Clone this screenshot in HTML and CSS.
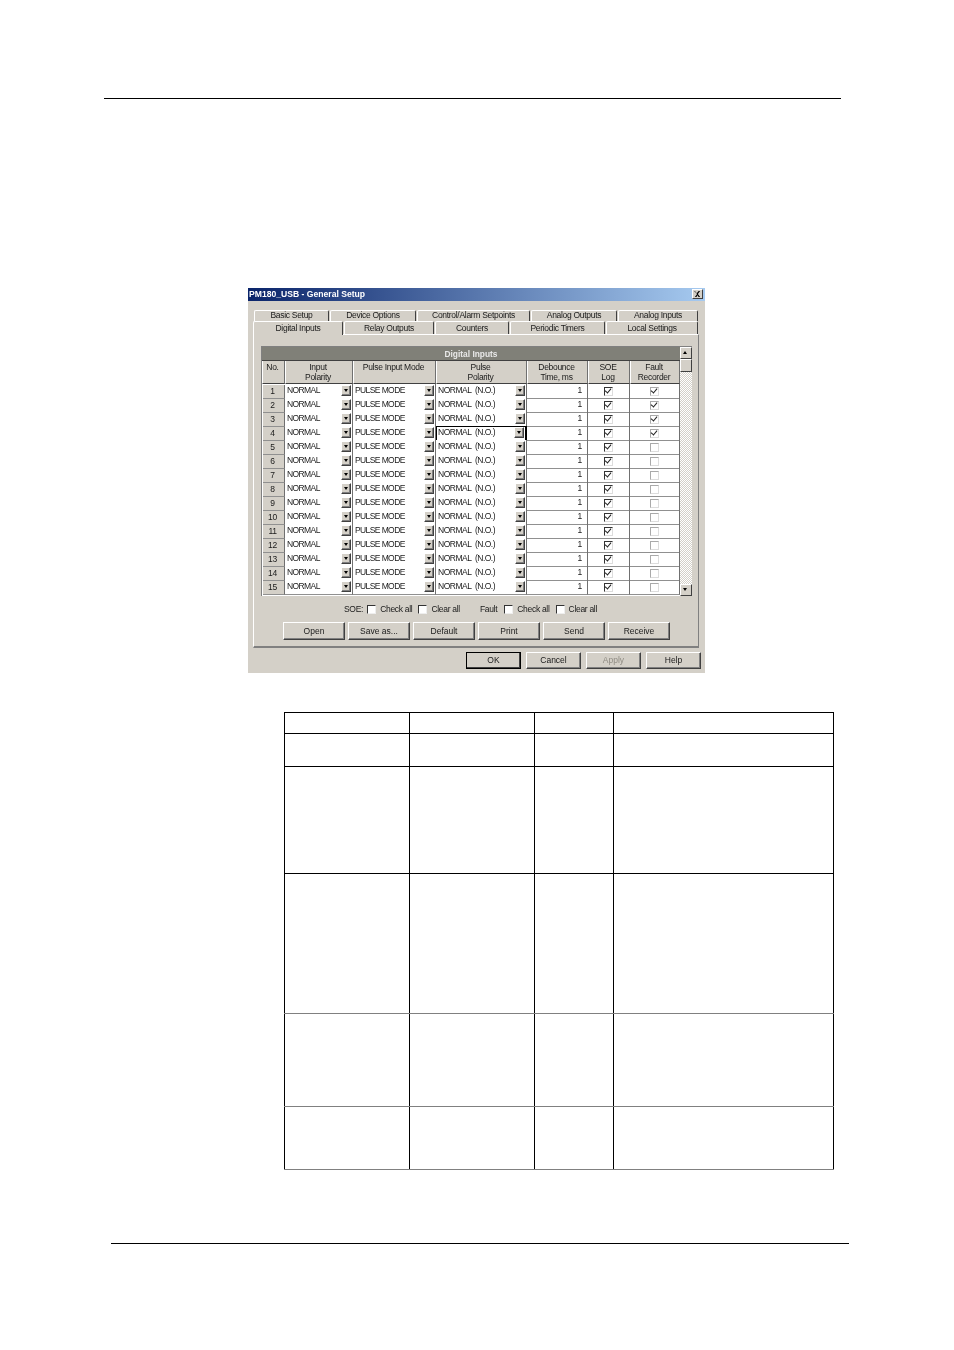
FILE: index.html
```html
<!DOCTYPE html>
<html lang="en">
<head>
    <meta charset="UTF-8" />
    <title>PM180 General Setup</title>
    <link rel="stylesheet" href="styles.css">
</head>
<body>
<div class="top-rule"></div>

<div class="dialog">
    <div class="title-bar">
        <span>PM180_USB - General Setup</span>
        <span class="close-btn">
            <svg width="9" height="8" viewBox="0 0 9 8"><path d="M1 0l2.500 3L6 0h2L5 4l3 4H6L4.500 5.500 3 8H1l3-4L0 0z" fill="#000"/></svg>
        </span>
    </div>

    <div class="tabs tabs-back">
        <div class="tab w-75">Basic Setup</div>
        <div class="tab w-86">Device Options</div>
        <div class="tab w-113">Control/Alarm Setpoints</div>
        <div class="tab w-86">Analog Outputs</div>
        <div class="tab w-80">Analog Inputs</div>
    </div>
    <div class="tabs tabs-front">
        <div class="tab tab-active">Digital Inputs</div>
        <div class="tab w-90">Relay Outputs</div>
        <div class="tab w-74">Counters</div>
        <div class="tab w-95">Periodic Timers</div>
        <div class="tab w-92">Local Settings</div>
    </div>

    <div class="panel">
        <div class="grid-wrap">
            <div class="grid">
                <div class="grid-title">Digital Inputs</div>
                <div class="row head">
                    <div>No.</div>
                    <div>Input<br>Polarity</div>
                    <div>Pulse Input Mode</div>
                    <div>Pulse<br>Polarity</div>
                    <div>Debounce<br>Time, ms</div>
                    <div>SOE<br>Log</div>
                    <div>Fault<br>Recorder</div>
                </div>
                <div class="row"><div class="no">1</div><div class="combo">NORMAL<i></i></div><div class="combo">PULSE MODE<i></i></div><div class="combo">NORMAL (N.O.)<i></i></div><div class="num">1</div><div class="cell-check"><b class="check on"></b></div><div class="cell-check"><b class="check flat on"></b></div></div>
                <div class="row"><div class="no">2</div><div class="combo">NORMAL<i></i></div><div class="combo">PULSE MODE<i></i></div><div class="combo">NORMAL (N.O.)<i></i></div><div class="num">1</div><div class="cell-check"><b class="check on"></b></div><div class="cell-check"><b class="check flat on"></b></div></div>
                <div class="row"><div class="no">3</div><div class="combo">NORMAL<i></i></div><div class="combo">PULSE MODE<i></i></div><div class="combo">NORMAL (N.O.)<i></i></div><div class="num">1</div><div class="cell-check"><b class="check on"></b></div><div class="cell-check"><b class="check flat on"></b></div></div>
                <div class="row"><div class="no">4</div><div class="combo">NORMAL<i></i></div><div class="combo">PULSE MODE<i></i></div><div class="combo focused">NORMAL (N.O.)<i></i></div><div class="num">1</div><div class="cell-check"><b class="check on"></b></div><div class="cell-check"><b class="check flat on"></b></div></div>
                <div class="row"><div class="no">5</div><div class="combo">NORMAL<i></i></div><div class="combo">PULSE MODE<i></i></div><div class="combo">NORMAL (N.O.)<i></i></div><div class="num">1</div><div class="cell-check"><b class="check on"></b></div><div class="cell-check"><b class="check flat"></b></div></div>
                <div class="row"><div class="no">6</div><div class="combo">NORMAL<i></i></div><div class="combo">PULSE MODE<i></i></div><div class="combo">NORMAL (N.O.)<i></i></div><div class="num">1</div><div class="cell-check"><b class="check on"></b></div><div class="cell-check"><b class="check flat"></b></div></div>
                <div class="row"><div class="no">7</div><div class="combo">NORMAL<i></i></div><div class="combo">PULSE MODE<i></i></div><div class="combo">NORMAL (N.O.)<i></i></div><div class="num">1</div><div class="cell-check"><b class="check on"></b></div><div class="cell-check"><b class="check flat"></b></div></div>
                <div class="row"><div class="no">8</div><div class="combo">NORMAL<i></i></div><div class="combo">PULSE MODE<i></i></div><div class="combo">NORMAL (N.O.)<i></i></div><div class="num">1</div><div class="cell-check"><b class="check on"></b></div><div class="cell-check"><b class="check flat"></b></div></div>
                <div class="row"><div class="no">9</div><div class="combo">NORMAL<i></i></div><div class="combo">PULSE MODE<i></i></div><div class="combo">NORMAL (N.O.)<i></i></div><div class="num">1</div><div class="cell-check"><b class="check on"></b></div><div class="cell-check"><b class="check flat"></b></div></div>
                <div class="row"><div class="no">10</div><div class="combo">NORMAL<i></i></div><div class="combo">PULSE MODE<i></i></div><div class="combo">NORMAL (N.O.)<i></i></div><div class="num">1</div><div class="cell-check"><b class="check on"></b></div><div class="cell-check"><b class="check flat"></b></div></div>
                <div class="row"><div class="no">11</div><div class="combo">NORMAL<i></i></div><div class="combo">PULSE MODE<i></i></div><div class="combo">NORMAL (N.O.)<i></i></div><div class="num">1</div><div class="cell-check"><b class="check on"></b></div><div class="cell-check"><b class="check flat"></b></div></div>
                <div class="row"><div class="no">12</div><div class="combo">NORMAL<i></i></div><div class="combo">PULSE MODE<i></i></div><div class="combo">NORMAL (N.O.)<i></i></div><div class="num">1</div><div class="cell-check"><b class="check on"></b></div><div class="cell-check"><b class="check flat"></b></div></div>
                <div class="row"><div class="no">13</div><div class="combo">NORMAL<i></i></div><div class="combo">PULSE MODE<i></i></div><div class="combo">NORMAL (N.O.)<i></i></div><div class="num">1</div><div class="cell-check"><b class="check on"></b></div><div class="cell-check"><b class="check flat"></b></div></div>
                <div class="row"><div class="no">14</div><div class="combo">NORMAL<i></i></div><div class="combo">PULSE MODE<i></i></div><div class="combo">NORMAL (N.O.)<i></i></div><div class="num">1</div><div class="cell-check"><b class="check on"></b></div><div class="cell-check"><b class="check flat"></b></div></div>
                <div class="row"><div class="no">15</div><div class="combo">NORMAL<i></i></div><div class="combo">PULSE MODE<i></i></div><div class="combo">NORMAL (N.O.)<i></i></div><div class="num">1</div><div class="cell-check"><b class="check on"></b></div><div class="cell-check"><b class="check flat"></b></div></div>
            </div>
            <div class="scrollbar">
                <div class="scroll-btn"><i class="up"></i></div>
                <div class="scroll-thumb"></div>
                <div class="scroll-track"></div>
                <div class="scroll-btn"><i class="down"></i></div>
            </div>
        </div>

        <div class="check-line">
            <span class="lbl-soe">SOE:</span>
            <b class="box"></b><span class="lbl-check">Check all</span>
            <b class="box"></b><span class="lbl-clear">Clear all</span>
            <span class="lbl-fault">Fault</span>
            <b class="box"></b><span class="lbl-check">Check all</span>
            <b class="box"></b><span>Clear all</span>
        </div>

        <div class="panel-buttons">
            <div class="btn">Open</div>
            <div class="btn">Save as...</div>
            <div class="btn">Default</div>
            <div class="btn">Print</div>
            <div class="btn">Send</div>
            <div class="btn">Receive</div>
        </div>
    </div>

    <div class="dialog-buttons">
        <div class="btn btn-default">OK</div>
        <div class="btn">Cancel</div>
        <div class="btn btn-disabled">Apply</div>
        <div class="btn">Help</div>
    </div>
</div>

<table class="doc-table">
    <tr class="h-21"><td></td><td></td><td></td><td></td></tr>
    <tr class="h-33"><td></td><td></td><td></td><td></td></tr>
    <tr class="h-107"><td></td><td></td><td></td><td></td></tr>
    <tr class="h-140 grey"><td></td><td></td><td></td><td></td></tr>
    <tr class="h-93 grey"><td></td><td></td><td></td><td></td></tr>
    <tr class="h-63 grey"><td></td><td></td><td></td><td></td></tr>
</table>

<div class="bottom-rule"></div>
</body>
</html>
```

FILE: styles.css
```css
body {
  margin: 0;
  background: white;
  font-family: "Liberation Sans", Arial, sans-serif;
  font-size: 8.5px;
  letter-spacing: -0.3px;
  color: #1a1a1a;
}

.top-rule {
  height: 1px;
  margin: 98px 113px 0 104px;
  background: #000;
}

.bottom-rule {
  height: 1px;
  margin: 73px 105px 0 111px;
  background: #000;
}

/* dialog */
.dialog {
  width: 457px;
  height: 385px;
  margin: 189px 0 0 248px;
  background: #d4d0c8;
  overflow: hidden;
  filter: blur(0.35px);
}

.title-bar {
  display: flex;
  justify-content: space-between;
  align-items: center;
  box-sizing: border-box;
  height: 13px;
  padding: 0 2px 1px 1px;
  background: linear-gradient(to right, #0a246a, #a6caf0);
  color: white;
  font-weight: bold;
  font-size: 8.6px;
  letter-spacing: 0;
}

.close-btn {
  display: flex;
  align-items: center;
  justify-content: center;
  width: 11px;
  height: 10px;
  background: #d4d0c8;
  border: 1px solid;
  border-color: #fff #404040 #404040 #fff;
  box-sizing: border-box;
}

.close-btn svg {
  width: 7px;
  height: 6px;
}

/* tabs */
.tabs {
  display: flex;
}

.tabs-back {
  height: 11px;
  margin: 9px 0 0 6px;
}

.tabs-back .tab {
  padding-bottom: 2px;
}

.tabs-front {
  height: 13px;
  margin: 0 0 0 5px;
}

.tab {
  display: flex;
  align-items: center;
  justify-content: center;
  box-sizing: border-box;
  margin-right: 1px;
  border-top: 1px solid #fff;
  border-left: 1px solid #fff;
  border-right: 1px solid #404040;
  border-radius: 2px 2px 0 0;
}

.w-75 { width: 75px; }
.w-86 { width: 86px; }
.w-113 { width: 113px; }
.w-80 { width: 80px; }
.w-90 { width: 90px; }
.w-74 { width: 74px; }
.w-95 { width: 95px; }
.w-92 { width: 92px; }

.tab-active {
  width: 90px;
  height: 14px;
  padding-bottom: 2px;
  background: #d4d0c8;
  position: relative;
  z-index: 1;
}

.panel {
  box-sizing: border-box;
  width: 446px;
  height: 314px;
  margin-left: 5px;
  padding: 11px 6px 0 7px;
  border-top: 1px solid #fff;
  border-left: 1px solid #fff;
  border-right: 1px solid #808080;
  border-bottom: 2px solid #808080;
}

/* digital inputs grid */
.grid-wrap {
  display: flex;
  width: 431px;
  height: 250px;
  box-sizing: border-box;
  border-top: 1px solid #808080;
  border-left: 1px solid #808080;
  background: #fff;
}

.grid {
  width: 418px;
}

.grid-title {
  height: 13px;
  line-height: 14px;
  background: #808078;
  color: #e8e8e8;
  font-size: 8.4px;
  font-weight: bold;
  letter-spacing: 0;
  text-align: center;
}

.row {
  display: grid;
  grid-template-columns: 22px 68px 83px 91px 61px 42px 50px;
  height: 14px;
  margin-left: 1px;
}

.row > div {
  box-sizing: border-box;
  border-right: 1px solid #707070;
  border-bottom: 1px solid #909090;
  line-height: 13px;
  white-space: nowrap;
}

.head {
  grid-template-columns: 23px 68px 83px 91px 61px 42px 50px;
  height: 24px;
  margin-left: 0;
  background: #d4d0c8;
  text-align: center;
  border-top: 1px solid #404040;
  box-sizing: border-box;
}

.head > div {
  line-height: 10px;
  padding: 1px 2px 0 0;
  border-left: 1px solid #fff;
  border-bottom-color: #404040;
}

.no {
  padding-right: 2px;
  background: #d4d0c8;
  text-align: center;
  margin-top: 1px;
}

.combo {
  position: relative;
  padding-left: 2px;
  background: #fff;
  letter-spacing: -0.6px;
}

.combo:nth-child(4) {
  word-spacing: 2px;
  letter-spacing: -0.5px;
}

.combo i {
  position: absolute;
  top: 1px;
  right: 1px;
  width: 10px;
  height: 11px;
  box-sizing: border-box;
  background: #d4d0c8;
  border: 1px solid;
  border-color: #fff #404040 #404040 #fff;
  box-shadow: inset -1px -1px 0 #808080;
}

.combo i::after,
.scroll-btn .down::after {
  content: "";
  position: absolute;
  left: 2px;
  top: 3px;
  border-top: 3px solid #000;
  border-left: 2.500px solid transparent;
  border-right: 2.500px solid transparent;
}

.focused {
  outline: 1px solid #000;
  outline-offset: -1px;
  border-right: 2px solid #000 !important;
}

.num {
  text-align: right;
  padding-right: 5px;
}

.cell-check {
  display: flex;
  align-items: center;
  justify-content: center;
}

.check {
  position: relative;
  display: block;
  box-sizing: border-box;
  width: 9px;
  height: 9px;
  background: #fff;
  border: 1px solid;
  border-color: #333 #ddd #ddd #333;
}

.check.flat {
  border-color: #aaa #ddd #ddd #aaa;
}

.check.on::after {
  content: "";
  position: absolute;
  left: 1px;
  top: -1px;
  width: 3px;
  height: 5px;
  border-right: 1.500px solid #222;
  border-bottom: 1.500px solid #222;
  transform: rotate(40deg);
}

/* scrollbar */
.scrollbar {
  display: flex;
  flex-direction: column;
  width: 12px;
}

.scroll-btn,
.scroll-thumb {
  position: relative;
  box-sizing: border-box;
  height: 12px;
  background: #d4d0c8;
  border: 1px solid;
  border-color: #fff #404040 #404040 #fff;
}

.scroll-thumb {
  height: 13px;
}

.scroll-track {
  flex: 1;
  background: repeating-conic-gradient(#d4d0c8 0 25%, #fff 0 50%) 0 0 / 2px 2px;
}

.scroll-btn .up::after {
  content: "";
  position: absolute;
  left: 2px;
  top: 3px;
  border-bottom: 3px solid #000;
  border-left: 2.500px solid transparent;
  border-right: 2.500px solid transparent;
}

/* lower part of the panel */
.check-line {
  display: flex;
  align-items: center;
  height: 10px;
  margin: 8px 0 0 83px;
}

.box {
  display: block;
  box-sizing: border-box;
  width: 9px;
  height: 9px;
  margin: 0 4px;
  background: #fff;
  border: 1px solid;
  border-color: #333 #eee #eee #333;
}

.lbl-soe { margin-right: 0; }
.lbl-check { margin-right: 2px; }
.lbl-clear { margin-right: 20px; }
.lbl-fault { margin-right: 3px; }

.panel-buttons {
  display: flex;
  gap: 3px;
  margin: 8px 0 0 22px;
}

.btn {
  display: flex;
  align-items: center;
  justify-content: center;
  box-sizing: border-box;
  width: 62px;
  height: 18px;
  background: #d4d0c8;
  border: 1px solid;
  border-color: #fff #404040 #404040 #fff;
  box-shadow: inset -1px -1px 0 #808080;
  letter-spacing: 0;
}

.dialog-buttons {
  display: flex;
  gap: 5px;
  margin: 4px 0 0 218px;
}

.dialog-buttons .btn {
  width: 55px;
  height: 17px;
  padding-bottom: 1px;
}

.dialog-buttons .btn-default {
  border: 1px solid #000;
  box-shadow: inset -1px -1px 0 #404040;
}

.btn-disabled {
  color: #908c84;
}

/* table below the dialog */
.doc-table {
  width: 550px;
  margin: 39px 0 0 284px;
  border-collapse: collapse;
  table-layout: fixed;
}

.doc-table td {
  padding: 0;
  border: 1px solid #000;
}

.doc-table .grey td {
  border-top-color: #808080;
  border-bottom-color: #808080;
}

.doc-table td:nth-child(1),
.doc-table td:nth-child(2) { width: 124px; }
.doc-table td:nth-child(3) { width: 78px; }

.h-21 td { height: 20px; }
.h-33 td { height: 32px; }
.h-107 td { height: 106px; }
.h-140 td { height: 139px; }
.h-93 td { height: 92px; }
.h-63 td { height: 62px; }
```
